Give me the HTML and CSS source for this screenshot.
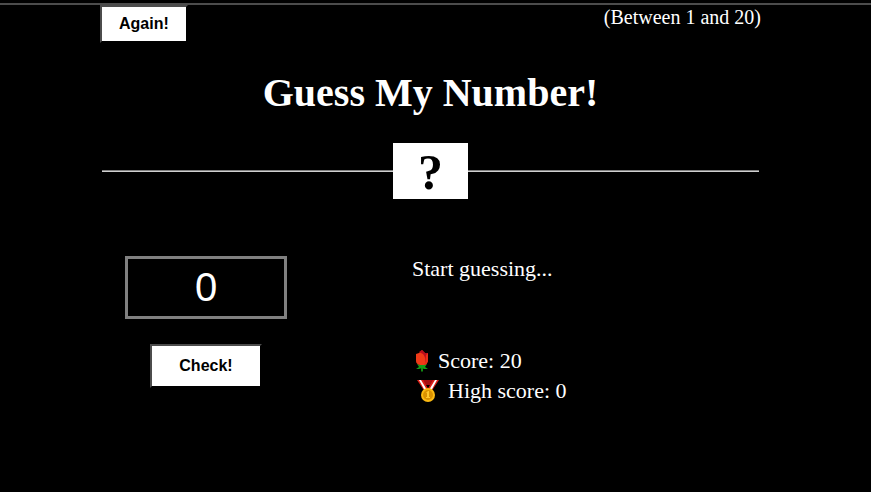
FILE: index.html
```html
<!DOCTYPE html>
<html lang="en">
<head>
<meta charset="utf-8">
<meta name="viewport" content="width=device-width, initial-scale=1">
<title>Guess My Number!</title>
<link rel="stylesheet" href="styles.css">
</head>
<body>
<header class="header">
  <div class="topbar">
    <button class="btn btn-again" type="button">Again!</button>
    <p class="between">(Between 1 and 20)</p>
  </div>
  <h1 class="title">Guess My Number!</h1>
  <div class="divider"><div class="number">?</div></div>
</header>
<main class="game">
  <section class="left">
    <input class="guess" type="text" inputmode="numeric" value="0" aria-label="Your guess">
    <button class="btn btn-check" type="button">Check!</button>
  </section>
  <section class="right">
    <p class="message">Start guessing...</p>
    <p class="stat stat-score">
      <svg class="rose" viewBox="0 0 18 22" aria-hidden="true">
        <path d="M9 12h2v9l-1 1-1-1z" fill="#128a12"/>
        <path d="M5 14l4 1 2 0 4-1-2 3 3 2-4 0-2-1-3 1-3 0 3-2z" fill="#139c17"/>
        <path d="M4 4l3-1 3-3 3 3 3 0v8q-1 4-4 4H8q-4-1-4-4z" fill="#f03a17"/>
        <path d="M7 2l3-2 3 3 3 0v7q-1 2-3 3 1-6-2-9z" fill="#b90d1c"/>
        <path d="M14 5l2-2v8q-1 3-4 4 2-4 2-10z" fill="#e92e18"/>
      </svg>
      <span>Score: <span>20</span></span>
    </p>
    <p class="stat stat-high">
      <svg class="medal" viewBox="0 0 22 22" aria-hidden="true">
        <path d="M5 0h12l-3 5H8z" fill="#a50e12"/>
        <path d="M0 0h6l6 10-4 2z" fill="#dc2018"/>
        <path d="M22 0h-6l-6 10 4 2z" fill="#dc2018"/>
        <path d="M2 0h2l6 10-2 1zM20 0h-2l-6 10 2 1z" fill="#fff"/>
        <circle cx="11" cy="15" r="7" fill="#fbb911"/>
        <circle cx="11" cy="15" r="5" fill="#d99100"/>
        <path d="M9 13l2-2h1v6h1v1H9v-1h1v-4z" fill="#ffc72c"/>
      </svg>
      <span>High score: <span>0</span></span>
    </p>
  </section>
</main>
</body>
</html>
```
FILE: styles.css
```css
* {
  box-sizing: border-box;
  margin: 0;
  padding: 0;
}

body {
  min-height: 100vh;
  padding-top: 3px;
  background: #000;
  color: #fff;
  font-family: "Liberation Serif", "Times New Roman", serif;
}

.header {
  padding: 0 112px 0 102px;
  border-top: 2px solid #4c4c4c;
}

.topbar {
  display: flex;
  justify-content: space-between;
  align-items: flex-start;
  margin: 0 -2px;
}

.between {
  font-size: 20px;
  line-height: 24px;
}

.btn {
  border: 2px solid;
  border-color: #4c4c4c #000 #000 #4c4c4c;
  background: #fff;
  color: #000;
  font: bold 16px/20px "Liberation Sans", Arial, sans-serif;
}

.btn-again {
  padding: 7px 17px;
}

.title {
  margin-top: 27px;
  font-size: 40px;
  line-height: 46px;
  text-align: center;
}

.divider {
  display: flex;
  align-items: center;
  margin-top: 27px;
}

.divider::before,
.divider::after {
  content: "";
  flex: 1;
  height: 1px;
  border-top: 1px solid #808080;
  background: #d0d0d0;
}

.number {
  padding: 2px 25px 0;
  background: #fff;
  color: #000;
  font-size: 50px;
  font-weight: bold;
  line-height: 54px;
}

.game {
  display: grid;
  grid-template-columns: 162px 1fr;
  column-gap: 125px;
  padding: 57px 112px 40px 125px;
}

.left {
  display: flex;
  flex-direction: column;
  align-items: center;
}

.guess {
  width: 100%;
  height: 63px;
  border: 3px solid #808080;
  background: #000;
  color: #fff;
  font: 40px/46px "Liberation Sans", Arial, sans-serif;
  text-align: center;
}

.btn-check {
  margin-top: 25px;
  padding: 10px 27px;
}

.right {
  font-size: 22px;
  line-height: 26px;
}

.message {
  margin-bottom: 64px;
}

.stat {
  display: flex;
  align-items: center;
  height: 30px;
}

.rose {
  width: 18px;
  height: 22px;
  margin-right: 8px;
}

.medal {
  width: 22px;
  height: 22px;
  margin: 0 9px 0 5px;
}
```
